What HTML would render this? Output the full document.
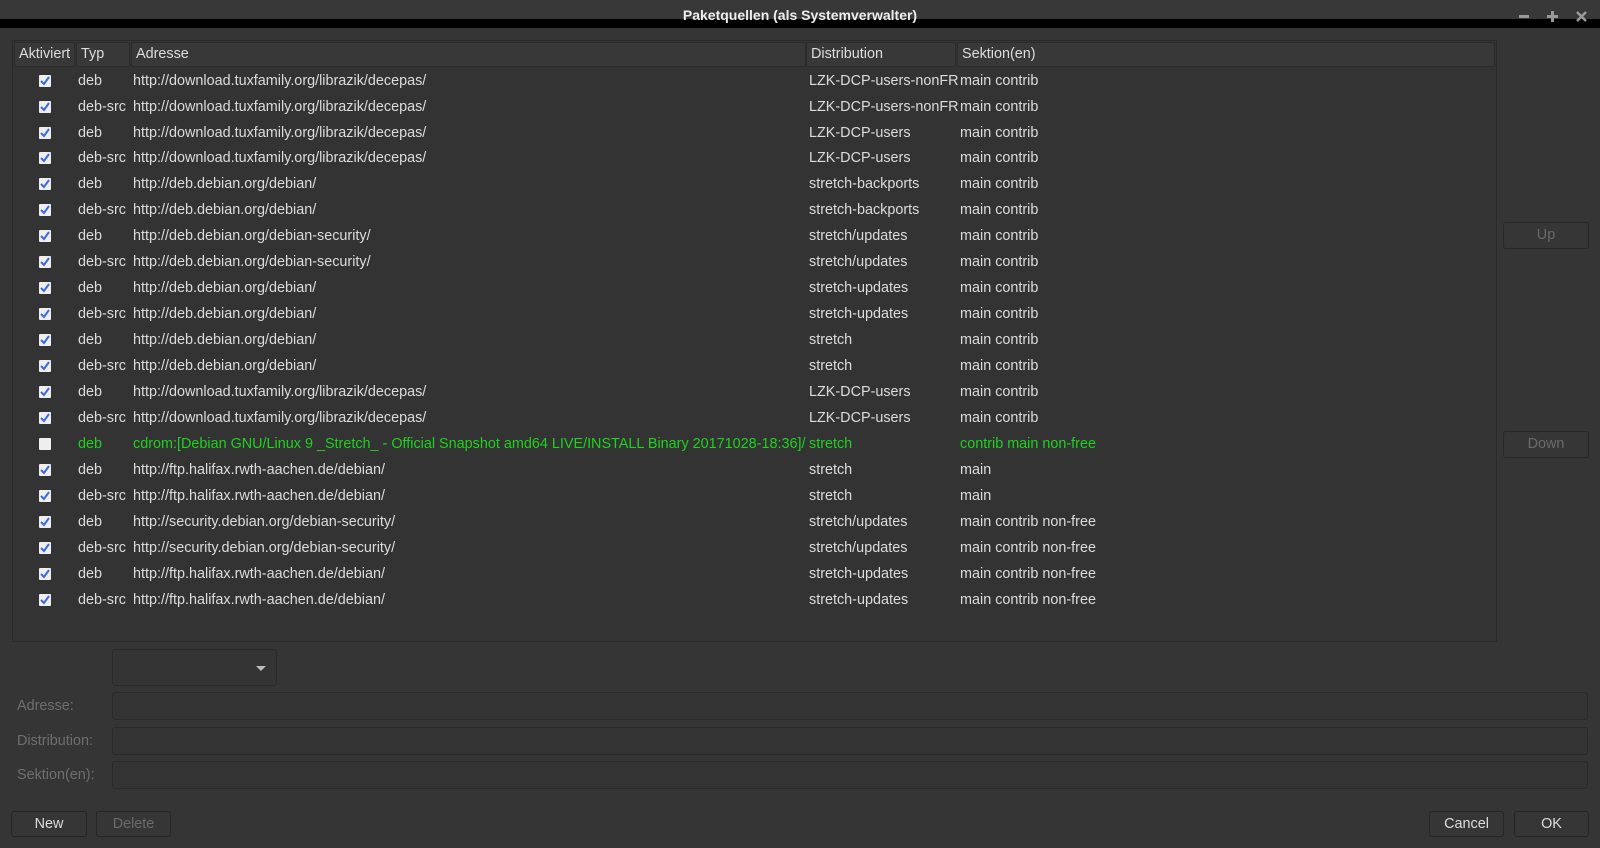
<!DOCTYPE html>
<html><head><meta charset="utf-8"><style>
*{margin:0;padding:0;box-sizing:border-box}
body{width:1600px;height:848px;background:#353535;font-family:"Liberation Sans","DejaVu Sans",sans-serif;font-size:14.4px;color:#dcdcdc;position:relative;overflow:hidden}
.a{position:absolute;white-space:nowrap}
#tb{left:0;top:0;width:1600px;height:19px;background:#383838}
#blk{left:0;top:19px;width:1600px;height:9px;background:#000}
#tt{left:0;top:6px;width:1600px;text-align:center;font-weight:bold;font-size:14px;color:#eee;line-height:18px}
#tbl{left:12px;top:40px;width:1485px;height:602px;border:1px solid #2a2a2a;background:#333}
.h{position:absolute;top:1px;height:25px;background:#383838;border:1px solid #2b2b2b;border-radius:2px;line-height:23px;padding-left:4px;color:#ddd}
.r{position:absolute;left:0;height:26px;line-height:26px;width:1483px}
.r span{position:absolute}
.cb{position:absolute;left:26px;top:7px;width:12px;height:12px;background:#eee;border-radius:1px}
.cb svg{position:absolute;left:1px;top:1px}
.g{color:#1ed21e}
.btn{position:absolute;border:1px solid #262626;background:#363636;border-radius:3px;text-align:center;line-height:24px;color:#ddd}
.dis{color:#6a6a6a}
.in{position:absolute;left:112px;width:1476px;height:28px;border:1px solid #2a2a2a;background:#333;border-radius:3px}
.lb{position:absolute;left:17px;color:#6e6e6e;line-height:28px}
</style></head><body>
<div class="a" id="tb"></div>
<div class="a" id="blk"></div>
<div class="a" id="tt">Paketquellen (als Systemverwalter)</div>
<div class="a" style="left:1519px;top:15px;width:10px;height:3px;background:#999"></div>
<div class="a" style="left:1547px;top:15px;width:11px;height:3px;background:#999"></div>
<div class="a" style="left:1551px;top:11px;width:3px;height:11px;background:#999"></div>
<svg class="a" style="left:1576px;top:11px" width="11" height="11" viewBox="0 0 11 11"><path d="M1 1L10 10M10 1L1 10" stroke="#999" stroke-width="2.5"/></svg>
<div class="a" id="tbl">
<div class="h" style="left:1px;width:61px">Aktiviert</div>
<div class="h" style="left:63px;width:54px">Typ</div>
<div class="h" style="left:118px;width:675px">Adresse</div>
<div class="h" style="left:793px;width:150px">Distribution</div>
<div class="h" style="left:944px;width:538px">Sektion(en)</div>
<div id="rows"></div>
</div>
<div class="btn dis" style="left:1503px;top:222px;width:86px;height:27px">Up</div>
<div class="btn dis" style="left:1503px;top:431px;width:86px;height:27px">Down</div>
<div class="a" style="left:112px;top:649px;width:165px;height:37px;border:1px solid #2a2a2a;border-radius:3px;background:#343434"></div>
<div class="a" style="left:256px;top:666px;width:0;height:0;border-left:5px solid transparent;border-right:5px solid transparent;border-top:5px solid #bbb"></div>
<div class="lb" style="top:692px">Adresse:</div><div class="in" style="top:692px"></div>
<div class="lb" style="top:727px">Distribution:</div><div class="in" style="top:727px"></div>
<div class="lb" style="top:761px">Sektion(en):</div><div class="in" style="top:761px"></div>
<div class="btn" style="left:11px;top:811px;width:76px;height:26px">New</div>
<div class="btn dis" style="left:96px;top:811px;width:75px;height:26px">Delete</div>
<div class="btn" style="left:1429px;top:811px;width:75px;height:26px">Cancel</div>
<div class="btn" style="left:1514px;top:811px;width:75px;height:26px">OK</div>
<script>
var T="http://download.tuxfamily.org/librazik/decepas/",D="http://deb.debian.org/debian/",S="http://deb.debian.org/debian-security/",F="http://ftp.halifax.rwth-aachen.de/debian/",Q="http://security.debian.org/debian-security/";
var R=[["deb",T,"LZK-DCP-users-nonFR","main contrib"],["deb-src",T,"LZK-DCP-users-nonFR","main contrib"],["deb",T,"LZK-DCP-users","main contrib"],["deb-src",T,"LZK-DCP-users","main contrib"],["deb",D,"stretch-backports","main contrib"],["deb-src",D,"stretch-backports","main contrib"],["deb",S,"stretch/updates","main contrib"],["deb-src",S,"stretch/updates","main contrib"],["deb",D,"stretch-updates","main contrib"],["deb-src",D,"stretch-updates","main contrib"],["deb",D,"stretch","main contrib"],["deb-src",D,"stretch","main contrib"],["deb",T,"LZK-DCP-users","main contrib"],["deb-src",T,"LZK-DCP-users","main contrib"],["deb","cdrom:[Debian GNU/Linux 9 _Stretch_ - Official Snapshot amd64 LIVE/INSTALL Binary 20171028-18:36]/","stretch","contrib main non-free",1],["deb",F,"stretch","main"],["deb-src",F,"stretch","main"],["deb",Q,"stretch/updates","main contrib non-free"],["deb-src",Q,"stretch/updates","main contrib non-free"],["deb",F,"stretch-updates","main contrib non-free"],["deb-src",F,"stretch-updates","main contrib non-free"]];
var h="";R.forEach(function(r,i){var chk=r[4]?"":'<svg width="10" height="10" viewBox="0 0 10 10"><path d="M1 5 L4 8 L9 1" stroke="#3a6ae0" stroke-width="2" fill="none"/></svg>';
h+='<div class="r'+(r[4]?' g':'')+'" style="top:'+(26.6+i*25.96)+'px"><div class="cb">'+chk+'</div><span style="left:65px">'+r[0]+'</span><span style="left:120px">'+r[1]+'</span><span style="left:796px">'+r[2]+'</span><span style="left:947px">'+r[3]+'</span></div>';});
document.getElementById("rows").innerHTML=h;
</script>
</body></html>
